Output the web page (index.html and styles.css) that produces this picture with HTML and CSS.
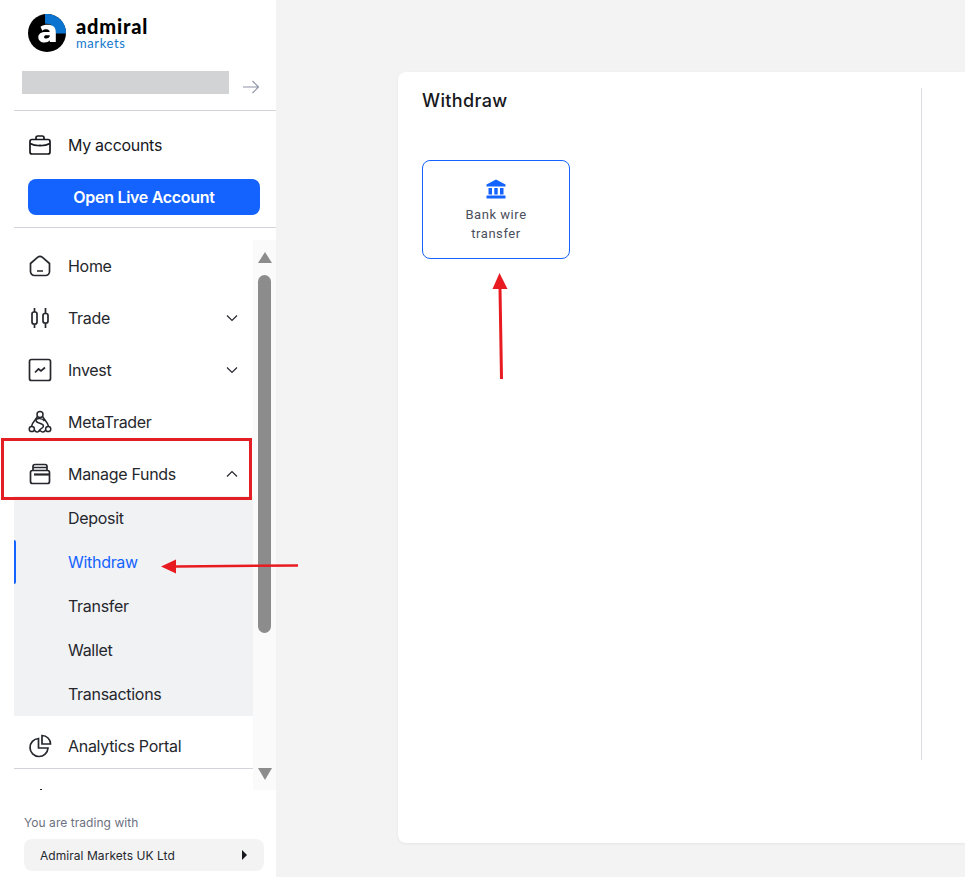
FILE: index.html
```html
<!DOCTYPE html>
<html lang="en">
<head>
<meta charset="utf-8">
<title>Withdraw</title>
<link rel="stylesheet" href="styles.css">
</head>
<body>
<div class="app">
  <aside class="sidebar">
    <div class="brand">
      <svg class="brand-mark" width="38" height="38" viewBox="0 0 38 38" aria-hidden="true">
        <circle cx="19" cy="19" r="19" fill="#000"/>
        <path d="M17 0.100A19 19 0 0 1 38 19.500H27.500L27 14.500L22 10.200L17 9.500Z" fill="#0a74d0"/>
        <path d="M12.500 12.700C14.500 11.300 17 10.700 19.500 10.700C24.800 10.700 27.800 13.200 27.800 17.900V28H21.800V26.300C20.500 27.800 18.700 28.500 16.600 28.500C12.800 28.500 10.300 26.300 10.300 23.200C10.300 19.800 13 17.900 17.800 17.900H21.700C21.500 16.300 20.300 15.300 18.400 15.300C16.900 15.300 15.400 15.800 14.300 16.700ZM21.700 21.300H18.500C16.800 21.300 16.100 21.900 16.100 22.900C16.100 23.900 16.900 24.500 18.200 24.500C19.700 24.500 21.100 23.800 21.700 22.600Z" fill="#fff" fill-rule="evenodd"/>
      </svg>
      <div class="brand-text">
        <div class="brand-name">admiral</div>
        <div class="brand-sub">markets</div>
      </div>
    </div>
    <div class="user-row">
      <div class="user-mask"></div>
      <svg width="18" height="14" viewBox="0 0 18 14" fill="none" stroke="#8d93a5" stroke-width="1.100" aria-hidden="true"><path d="M1 7H16.500M10.500 1L16.500 7L10.500 13"/></svg>
    </div>
    <div class="accounts">
      <a class="item accounts-link">
        <svg class="icon" width="24" height="24" viewBox="0 0 24 24" fill="none" stroke="#16181d" stroke-width="1.700" aria-hidden="true"><rect x="2" y="6.500" width="20" height="14.500" rx="2"/><path d="M8 6.500V4.800A1.800 1.800 0 0 1 9.800 3H14.200A1.800 1.800 0 0 1 16 4.800V6.500M2 10.500C7 13.500 17 13.500 22 10.500M12 11.500V13.500"/></svg>
        <span>My accounts</span>
      </a>
      <button class="open-btn" type="button">Open Live Account</button>
    </div>
    <div class="nav-wrap">
      <nav class="nav">
        <a class="item">
          <svg class="icon" width="24" height="24" viewBox="0 0 24 24" fill="none" stroke="#25272d" stroke-width="1.700" aria-hidden="true"><path d="M2.500 9.500L9.800 3.200A3.400 3.400 0 0 1 14.200 3.200L21.500 9.500V17.500A4 4 0 0 1 17.500 21.500H6.500A4 4 0 0 1 2.500 17.500ZM9 17H15"/></svg>
          <span>Home</span>
        </a>
        <a class="item">
          <svg class="icon" width="24" height="24" viewBox="0 0 24 24" fill="none" stroke="#25272d" stroke-width="1.700" aria-hidden="true"><rect x="4" y="6" width="5" height="12" rx="2"/><rect x="15" y="7.500" width="5" height="9.500" rx="2"/><path d="M6.500 2V6M6.500 18V22M17.500 2V7.500M17.500 17V22"/></svg>
          <span>Trade</span>
          <svg class="chev" width="12" height="8" viewBox="0 0 12 8" fill="none" stroke="#25272d" stroke-width="1.200" aria-hidden="true"><path d="M1 1.500L6 6.500L11 1.500"/></svg>
        </a>
        <a class="item">
          <svg class="icon" width="24" height="24" viewBox="0 0 24 24" fill="none" stroke="#25272d" stroke-width="1.700" aria-hidden="true"><rect x="1.500" y="1.500" width="21" height="21" rx="2"/><path d="M7 14.500L10.500 11L13 13L17 9.500"/></svg>
          <span>Invest</span>
          <svg class="chev" width="12" height="8" viewBox="0 0 12 8" fill="none" stroke="#25272d" stroke-width="1.200" aria-hidden="true"><path d="M1 1.500L6 6.500L11 1.500"/></svg>
        </a>
        <a class="item">
          <svg class="icon" width="24" height="24" viewBox="0 0 24 24" fill="none" stroke="#25272d" stroke-width="1.500" aria-hidden="true"><circle cx="12" cy="4.500" r="3"/><circle cx="3.800" cy="19" r="2.600"/><circle cx="20.200" cy="19" r="2.600"/><path d="M9.500 6.500L4.500 13.500L3.500 16.400M14.500 6.500L19.500 13.500L20.500 16.400M8 10C9.500 8 14 8 16.500 11"/><path d="M8 10C7.500 14 15.500 12.500 15.500 16C15.500 18.500 12 18 10.500 21.500"/><path d="M6.300 20C8 22.500 10 22.500 12 20.500C14 22.500 16 22.500 17.700 20"/></svg>
          <span>MetaTrader</span>
        </a>
        <a class="item item-open">
          <svg class="icon" width="24" height="24" viewBox="0 0 24 24" fill="none" stroke="#25272d" stroke-width="1.700" aria-hidden="true"><rect x="2.500" y="8.500" width="19" height="13" rx="2"/><path d="M6 12.500H21.500" stroke-width="2.200"/><path d="M5 8.500V4.500A2 2 0 0 1 7 2.500H17A2 2 0 0 1 19 4.500V8.500M5 5.500H19"/></svg>
          <span>Manage Funds</span>
          <svg class="chev" width="12" height="8" viewBox="0 0 12 8" fill="none" stroke="#25272d" stroke-width="1.200" aria-hidden="true"><path d="M1 6.500L6 1.500L11 6.500"/></svg>
        </a>
        <div class="submenu">
          <a class="sub">Deposit</a>
          <a class="sub sub-active">Withdraw</a>
          <a class="sub">Transfer</a>
          <a class="sub">Wallet</a>
          <a class="sub">Transactions</a>
        </div>
        <a class="item item-last">
          <svg class="icon" width="24" height="24" viewBox="0 0 24 24" fill="none" stroke="#25272d" stroke-width="1.700" aria-hidden="true"><path d="M10.500 4.500A9 9 0 1 0 20 14H10.500Z"/><path d="M14 1.500A8.500 8.500 0 0 1 22.500 10H14Z"/></svg>
          <span>Analytics Portal</span>
        </a>
        <div class="nav-rule"></div>
        <div class="nav-clip"><span class="clip-dot"></span></div>
      </nav>
      <div class="scrollbar">
        <span class="tri-up"></span>
        <span class="thumb"></span>
        <span class="tri-down"></span>
      </div>
    </div>
    <div class="side-foot">
      <div class="trading-label">You are trading with</div>
      <div class="entity"><span>Admiral Markets UK Ltd</span><i class="entity-arrow"></i></div>
    </div>
  </aside>
  <main class="main">
    <section class="card">
      <div class="card-col">
        <h1 class="card-title">Withdraw</h1>
        <div class="method">
          <svg width="20" height="20" viewBox="0 0 20 20" fill="#1463ff" aria-hidden="true"><path d="M10 0.500L19.500 5.500V7.500H0.500V5.500Z"/><path d="M2.500 9H6V15.500H2.500ZM8.300 9H11.700V15.500H8.300ZM14 9H17.500V15.500H14ZM0.500 16.500H19.500V19.500H0.500Z"/></svg>
          <div class="method-label">Bank wire<br>transfer</div>
        </div>
      </div>
      <div class="card-rule"></div>
    </section>
  </main>
</div>
<div class="mark-box"></div>
<svg class="marks" width="965" height="877" viewBox="0 0 965 877" aria-hidden="true">
  <path d="M298 565.500L176 566.500" stroke="#e81c20" stroke-width="2.500" fill="none"/>
  <path d="M161 566.500L176 559.500V573.500Z" fill="#e81c20"/>
  <path d="M500 288L501.500 379" stroke="#e81c20" stroke-width="3" fill="none"/>
  <path d="M499.500 273L507.500 289H492.500Z" fill="#e81c20"/>
</svg>
</body>
</html>
```
FILE: styles.css
```css
* { box-sizing: border-box; }
html, body { margin: 0; height: 100%; }
body {
  position: relative;
  width: 965px;
  height: 877px;
  overflow: hidden;
  background: #f3f3f4;
  font-family: "Inter", "Liberation Sans", sans-serif;
  color: #25272d;
}
.app { display: flex; height: 877px; }

.sidebar {
  width: 276px;
  flex: none;
  display: flex;
  flex-direction: column;
  background: #fff;
}
.brand {
  display: flex;
  align-items: center;
  gap: 10px;
  height: 38px;
  margin: 14px 0 0 28px;
}
.brand-text { display: flex; flex-direction: column; gap: 1px; }
.brand-name {
  font-family: "Lato", sans-serif;
  font-weight: 900;
  font-size: 20px;
  line-height: 19px;
  letter-spacing: 0.8px;
  color: #000;
}
.brand-sub {
  font-family: "Lato", sans-serif;
  font-size: 13px;
  line-height: 13px;
  letter-spacing: 0.6px;
  color: #1478cc;
}
.user-row {
  display: flex;
  align-items: flex-start;
  height: 40px;
  margin: 19px 0 0 14px;
  padding-left: 8px;
  border-bottom: 1px solid #d3d4da;
}
.user-row svg { margin: 9px 0 0 13px; }
.user-mask { width: 207px; height: 23px; background: #d2d3d5; }
.accounts {
  height: 117px;
  margin-left: 14px;
  border-bottom: 1px solid #d3d4da;
}
.item {
  display: flex;
  align-items: center;
  height: 52px;
  padding-left: 14px;
  font-size: 16px;
  letter-spacing: -0.3px;
  color: #25272d;
}
.item .icon { flex: none; margin-right: 16px; }
.accounts-link { height: 68px; color: #16181d; }
.open-btn {
  display: block;
  width: 232px;
  height: 36px;
  margin-left: 14px;
  border: 0;
  border-radius: 8px;
  background: #1463ff;
  color: #fff;
  font: 600 16px "Inter", sans-serif;
  letter-spacing: -0.3px;
  padding: 0;
}
.nav-wrap {
  display: flex;
  height: 550px;
  margin-top: 12px;
  flex: none;
}
.nav {
  width: 239px;
  margin-left: 14px;
  flex: none;
  overflow: hidden;
}
.chev { margin-left: auto; margin-right: 15px; }
.item-open { height: 48px; padding-top: 4px; }
.submenu { background: #f1f2f4; }
.sub {
  display: flex;
  align-items: center;
  height: 44px;
  padding-left: 54px;
  font-size: 16px;
  letter-spacing: -0.3px;
  color: #25272d;
}
.sub-active { position: relative; color: #1463ff; }
.sub-active::before {
  content: "";
  position: absolute;
  left: 0;
  top: 0;
  width: 2px;
  height: 44px;
  background: #1463ff;
  border-radius: 0 2px 2px 0;
}
.item-last { padding-top: 8px; }
.nav-rule { height: 1px; background: #d3d4da; }
.nav-clip { height: 21px; padding: 20px 0 0 26px; }
.clip-dot { display: block; width: 2px; height: 1px; background: #25272d; }
.scrollbar {
  width: 23px;
  flex: none;
  display: flex;
  flex-direction: column;
  align-items: center;
  background: #fafafa;
  padding: 12px 0 0;
}
.tri-up {
  width: 0; height: 0;
  border-left: 7.500px solid transparent;
  border-right: 7.500px solid transparent;
  border-bottom: 11px solid #8c8c8c;
}
.thumb {
  width: 13px;
  height: 358px;
  margin: 12px 0 135px;
  border-radius: 7px;
  background: #8c8c8c;
}
.tri-down {
  width: 0; height: 0;
  border-left: 7.500px solid transparent;
  border-right: 7.500px solid transparent;
  border-top: 12px solid #8c8c8c;
}
.side-foot { padding: 25px 12px 0 24px; }
.trading-label {
  font-size: 12px;
  line-height: 16px;
  letter-spacing: 0.05px;
  color: #6c7080;
}
.entity {
  display: flex;
  align-items: center;
  justify-content: space-between;
  height: 32px;
  margin-top: 8px;
  padding: 0 17px 0 16px;
  border-radius: 8px;
  background: #f3f3f4;
  font-size: 12px;
  letter-spacing: 0.05px;
  color: #25272d;
}
.entity-arrow {
  width: 0; height: 0;
  border-top: 5px solid transparent;
  border-bottom: 5px solid transparent;
  border-left: 5px solid #16181d;
}

.main { flex: 1; min-width: 0; padding: 72px 0 34px 122px; }
.card {
  display: flex;
  height: 771px;
  width: 567px;
  padding: 16px 0 0 24px;
  background: #fff;
  border-radius: 8px 0 0 8px;
  box-shadow: 0 1px 3px rgba(0, 0, 0, 0.06);
}
.card-col { width: 499px; flex: none; }
.card-title {
  margin: 0;
  padding-top: 1px;
  height: 24px;
  font: 500 18px/24px "Inter", sans-serif;
  letter-spacing: 0.35px;
  color: #16181d;
}
.method {
  display: flex;
  flex-direction: column;
  align-items: center;
  width: 148px;
  height: 99px;
  margin-top: 48px;
  padding-top: 18px;
  border: 1px solid #1463ff;
  border-radius: 8px;
}
.method-label {
  margin-top: 6px;
  font: 400 13px/19px "Roboto", sans-serif;
  letter-spacing: 0.55px;
  text-align: center;
  color: #4b4e5c;
}
.card-rule { width: 1px; height: 672px; background: #dcdde2; }

.mark-box {
  position: absolute;
  left: 1px;
  top: 438px;
  width: 251px;
  height: 62px;
  border: 3px solid #e31e24;
}
.marks { position: absolute; left: 0; top: 0; pointer-events: none; }
```
